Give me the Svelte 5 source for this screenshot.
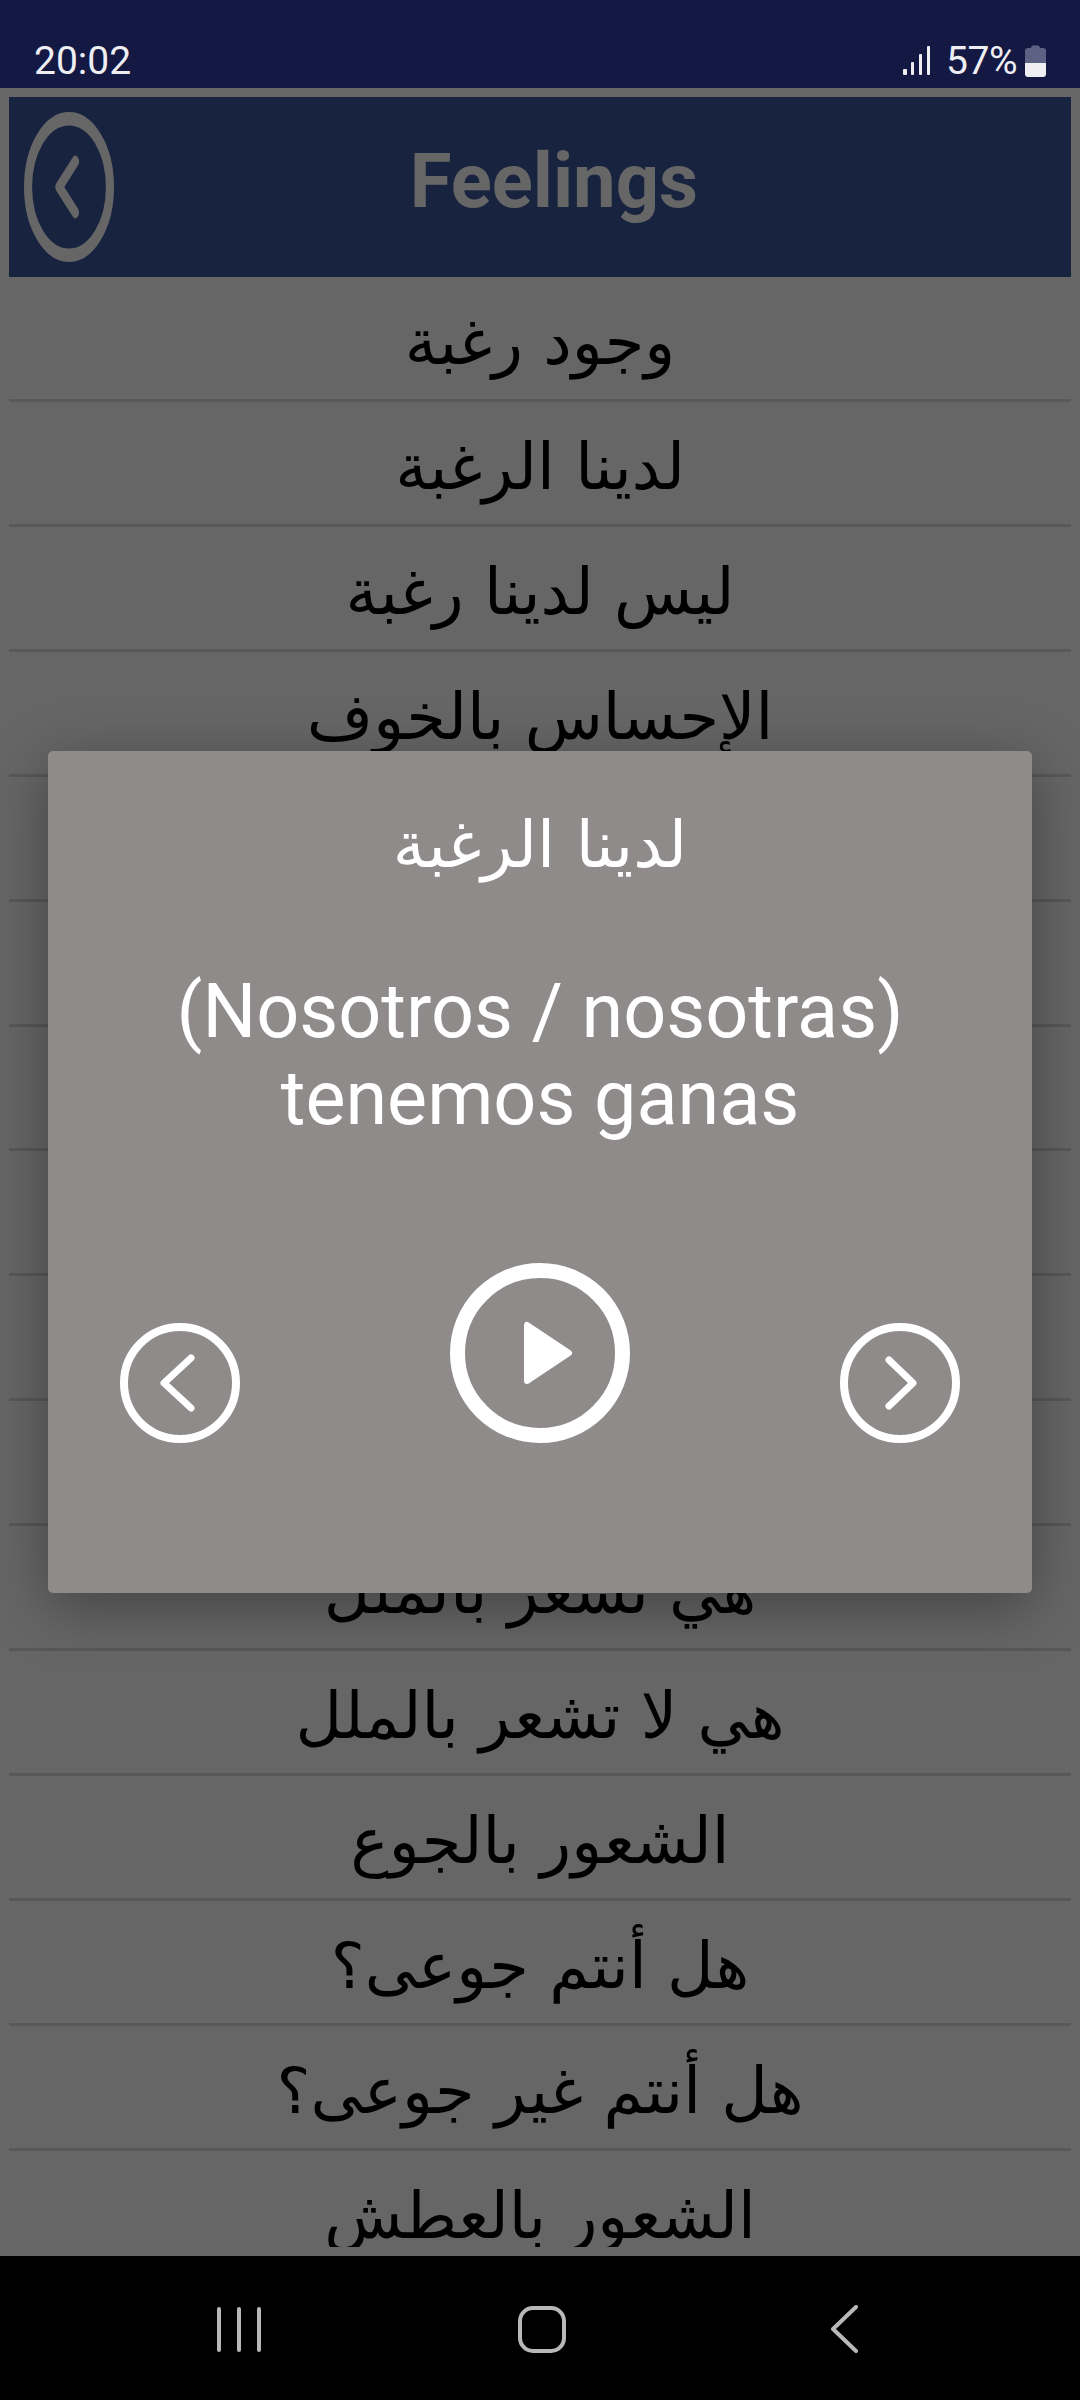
<script>
  // rows 5 to 10 are completely behind the dialog, only their dividers show at its sides
  const rows = [
    "وجود رغبة",
    "لدينا الرغبة",
    "ليس لدينا رغبة",
    "الإحساس بالخوف",
    "",
    "",
    "",
    "",
    "",
    "",
    "هي تشعر بالملل",
    "هي لا تشعر بالملل",
    "الشعور بالجوع",
    "هل أنتم جوعى؟",
    "هل أنتم غير جوعى؟",
    "الشعور بالعطش"
  ];
</script>

<div class="phone">
  <div class="status">
    <span class="time">20:02</span>
    <div class="status-right">
      <svg class="signal" width="28" height="30" viewBox="0 0 28 30" fill="#eeeef3">
        <rect x="0" y="24" width="4" height="6" rx="1" />
        <rect x="8" y="17" width="3" height="13" rx="1" />
        <rect x="16" y="9" width="3" height="21" rx="1" />
        <rect x="24" y="1" width="3" height="29" rx="1" />
      </svg>
      <span class="pct">57%</span>
      <svg class="battery" width="21" height="32" viewBox="0 0 21 32">
        <path d="M6 3q0-2.500 2-2.500h5q2 0 2 2.500h3q3 0 3 3v12H0V6q0-3 3-3z" fill="#5d6285" />
        <path d="M0 18h21v11q0 3-3 3H3q-3 0-3-3z" fill="#eeeef3" />
      </svg>
    </div>
  </div>

  <div class="content">
    <header class="head">
      <svg class="back" width="90" height="150" viewBox="0 0 100 100" preserveAspectRatio="none">
        <ellipse cx="50" cy="50" rx="45.500" ry="45.500" fill="none" stroke="#fff" stroke-width="9" />
        <path d="M57 33 39 50 57 67" fill="none" stroke="#fff" stroke-width="8" stroke-linecap="round" stroke-linejoin="round" />
      </svg>
      <h1>Feelings</h1>
    </header>
    <div class="list">
      {#each rows as row}
        <div class="row" dir="rtl" lang="ar">{row}</div>
      {/each}
    </div>
  </div>

  <div class="nav">
    <div class="recents"><i></i><i></i><i></i></div>
    <div class="home"></div>
    <svg class="nav-back" width="28" height="48" viewBox="0 0 28 48">
      <path d="M26 2 3 24l23 22" fill="none" stroke="#b8b8b8" stroke-width="4" stroke-linecap="round" stroke-linejoin="round" />
    </svg>
  </div>

  <div class="scrim">
    <div class="dialog">
      <div class="dlg-ar" dir="rtl" lang="ar">لدينا الرغبة</div>
      <div class="dlg-es">(Nosotros / nosotras)<br />tenemos ganas</div>
      <div class="controls">
        <svg width="120" height="120" viewBox="0 0 120 120">
          <circle cx="60" cy="60" r="56" fill="none" stroke="#fff" stroke-width="8" />
          <path d="M71 35 44 60l27 25" fill="none" stroke="#fff" stroke-width="7" stroke-linecap="round" stroke-linejoin="round" />
        </svg>
        <svg class="play" width="180" height="180" viewBox="0 0 180 180">
          <circle cx="90" cy="90" r="82.500" fill="none" stroke="#fff" stroke-width="15" />
          <path d="M77 62v56l42-28z" fill="#fff" stroke="#fff" stroke-width="6" stroke-linejoin="round" />
        </svg>
        <svg width="120" height="120" viewBox="0 0 120 120">
          <circle cx="60" cy="60" r="56" fill="none" stroke="#fff" stroke-width="8" />
          <path d="M49 37 73 60 49 83" fill="none" stroke="#fff" stroke-width="7" stroke-linecap="round" stroke-linejoin="round" />
        </svg>
      </div>
    </div>
  </div>
</div>

<style>
  :global(body) {
    margin: 0;
  }

  .phone {
    position: relative;
    display: flex;
    flex-direction: column;
    width: 1080px;
    height: 2400px;
    overflow: hidden;
    background: #fff;
    font-family: Roboto, sans-serif;
  }

  .status {
    flex: none;
    height: 88px;
    box-sizing: border-box;
    padding: 38px 34px 0 34px;
    display: flex;
    justify-content: space-between;
    align-items: flex-start;
    background: #141944;
    color: #eeeef3;
    font-size: 39px;
    line-height: 46px;
  }

  .status-right {
    display: flex;
    align-items: flex-start;
  }

  .signal {
    margin-top: 7px;
    margin-right: 15px;
  }

  .pct {
    letter-spacing: -0.5px;
  }

  .battery {
    margin-top: 7px;
    margin-left: 8px;
  }

  .content {
    flex: 1;
    min-height: 0;
    display: flex;
    flex-direction: column;
    padding: 9px;
  }

  .head {
    flex: none;
    height: 180px;
    display: flex;
    align-items: center;
    padding-left: 15px;
    background: #3c589e;
  }

  .back {
    flex: none;
  }

  h1 {
    flex: 1;
    margin: 0 0 12px;
    padding-right: 77px;
    text-align: center;
    color: #fff;
    font-size: 76px;
    font-weight: 700;
  }

  .list {
    flex: 1;
    min-height: 0;
    overflow: hidden;
  }

  .row {
    height: 124.930px;
    box-sizing: border-box;
    display: flex;
    align-items: center;
    justify-content: center;
    padding-top: 8px;
    border-bottom: 3px solid #dcdcdc;
    color: #000;
    font-family: "DejaVu Sans", sans-serif;
    font-size: 64px;
    white-space: nowrap;
  }

  .nav {
    flex: none;
    height: 144px;
    background: #000;
    position: relative;
    z-index: 2;
    display: flex;
    align-items: flex-start;
    padding-top: 50px;
    box-sizing: border-box;
  }

  .recents {
    display: flex;
    gap: 16px;
    margin-left: 217px;
    margin-top: 1px;
  }

  .recents i {
    display: block;
    width: 4px;
    height: 45px;
    border-radius: 2px;
    background: #b8b8b8;
  }

  .home {
    width: 40px;
    height: 39px;
    margin-left: 257px;
    border: 4px solid #b8b8b8;
    border-radius: 15px;
  }

  .nav-back {
    margin-left: 264px;
    margin-top: -1px;
  }

  .scrim {
    position: absolute;
    left: 0;
    right: 0;
    top: 88px;
    bottom: 144px;
    background: rgba(0, 0, 0, 0.6);
    display: flex;
    justify-content: center;
    align-items: flex-start;
    padding-top: 663px;
    box-sizing: border-box;
  }

  .dialog {
    width: 984px;
    height: 842px;
    box-sizing: border-box;
    border-radius: 5px;
    background: #8f8b8b;
    color: #fff;
    box-shadow: 0 14px 60px rgba(0, 0, 0, 0.35);
    display: flex;
    flex-direction: column;
    align-items: center;
    padding-top: 47px;
  }

  .dlg-ar {
    height: 94px;
    line-height: 94px;
    font-family: "DejaVu Sans", sans-serif;
    font-size: 65px;
  }

  .dlg-es {
    margin-top: 76px;
    text-align: center;
    font-size: 75.500px;
    line-height: 87px;
  }

  .controls {
    align-self: stretch;
    display: flex;
    justify-content: space-between;
    align-items: flex-end;
    margin-top: 121px;
    padding: 0 72px;
  }
</style>
